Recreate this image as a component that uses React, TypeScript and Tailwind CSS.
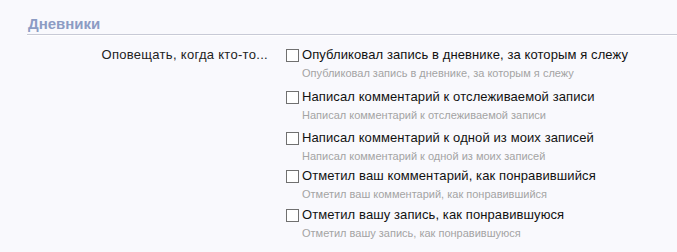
import React from 'react';

const options = [
  { label: 'Опубликовал запись в дневнике, за которым я слежу', mt: 'mt-0' },
  { label: 'Написал комментарий к отслеживаемой записи', mt: 'mt-[7px]' },
  { label: 'Написал комментарий к одной из моих записей', mt: 'mt-[6px]' },
  { label: 'Отметил ваш комментарий, как понравившийся', mt: 'mt-[3px]' },
  { label: 'Отметил вашу запись, как понравившуюся', mt: 'mt-[4px]' },
];

const App: React.FC = () => {
  return (
    <div className="w-[677px] h-[252px] bg-[#f9f9fd] overflow-hidden font-['Liberation_Sans',Arial,sans-serif]">
      <div className="pl-[27px] pt-[14px]">
        <h2 className="text-[15px] leading-[20px] font-bold text-[#8c9cc4] pl-[1px]">Дневники</h2>
        <div className="h-[1px] bg-[#c8cad6]" />
        <div className="h-[1px] bg-white" />
      </div>

      <div className="flex mt-[10px]">
        <div className="w-[270px] pr-[2px] text-right text-[13px] leading-[18px] text-[#222] tracking-[0.3px]">
          Оповещать, когда кто-то...
        </div>
        <div className="ml-[16px] flex flex-col">
          {options.map((o) => (
            <div key={o.label} className={o.mt}>
              <label className="flex items-center">
                <span className="w-[13px] h-[13px] border border-[#707070] bg-white shrink-0" />
                <span className="ml-[3px] text-[13px] leading-[18px] text-[#111] tracking-[0.1px]">{o.label}</span>
              </label>
              <div className="pl-[16px] text-[11px] leading-[16px] text-[#a4a4a4] mt-[1px]">{o.label}</div>
            </div>
          ))}
        </div>
      </div>
    </div>
  );
};

export default App;
